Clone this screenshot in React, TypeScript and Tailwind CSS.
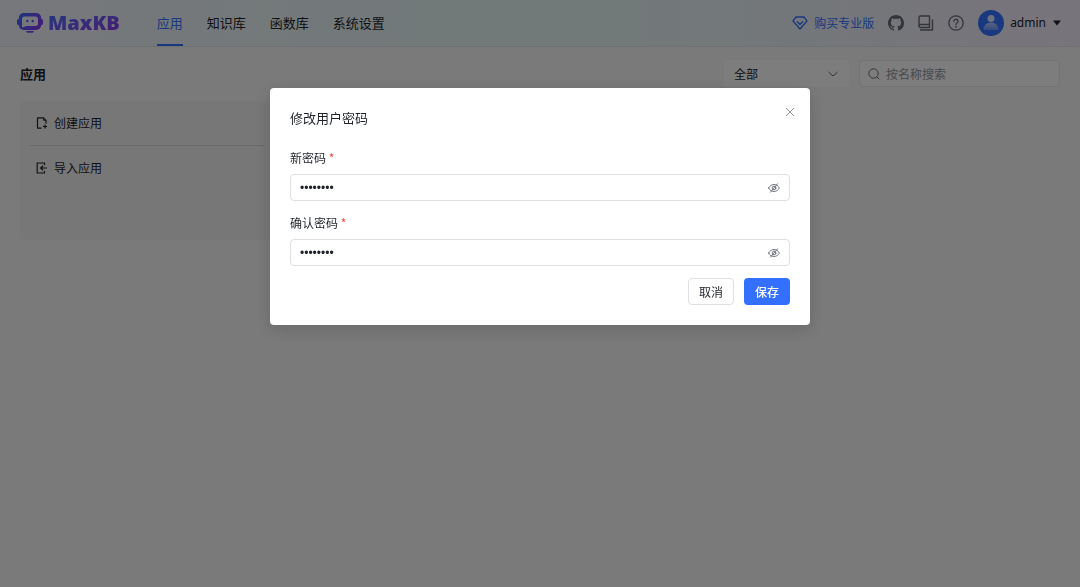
import { useState } from "react";
import type { ReactNode } from "react";

const navItems = ["应用", "知识库", "函数库", "系统设置"];

function LogoIcon() {
  return (
    <svg width="26" height="22" viewBox="0 0 26 22" fill="none">
      <defs>
        <linearGradient id="logo" x1="0" y1="0" x2="26" y2="22" gradientUnits="userSpaceOnUse">
          <stop stopColor="#3370ff" />
          <stop offset="1" stopColor="#9a2de8" />
        </linearGradient>
      </defs>
      <rect x="0" y="7" width="26" height="6" rx="1.5" fill="url(#logo)" />
      <rect x="1.8" y="1" width="22.4" height="17" rx="5" fill="url(#logo)" />
      <path d="M7.5 4.500h11A2.500 2.500 0 0 1 21 7v4.500a2.500 2.500 0 0 1-2.500 2.500H9.500L5 15.500V7a2.500 2.500 0 0 1 2.500-2.500z" fill="#eceff8" />
      <circle cx="10.300" cy="9" r="1.200" fill="url(#logo)" />
      <circle cx="15.700" cy="9" r="1.200" fill="url(#logo)" />
      <path d="M9 19h8l-1 1.800h-6z" fill="url(#logo)" />
    </svg>
  );
}

function DiamondIcon() {
  return (
    <svg width="16" height="16" viewBox="0 0 16 16" fill="none" stroke="#3370ff" strokeWidth="1.300" strokeLinejoin="round" strokeLinecap="round">
      <path d="M4 2h8l3 4-7 8-7-8z" />
      <path d="M5.300 6.700L8 9.500l2.700-2.800" />
    </svg>
  );
}

function GithubIcon() {
  return (
    <svg width="16" height="16" viewBox="0 0 16 16" fill="currentColor">
      <path d="M8 0C3.580 0 0 3.580 0 8c0 3.540 2.290 6.530 5.470 7.590.4.070.55-.17.55-.38 0-.19-.01-.82-.01-1.490-2.010.37-2.530-.49-2.690-.94-.09-.23-.48-.94-.82-1.130-.28-.15-.68-.52-.01-.53.63-.01 1.080.58 1.230.82.72 1.210 1.870.87 2.330.66.07-.52.28-.87.51-1.070-1.780-.2-3.640-.89-3.640-3.950 0-.87.31-1.590.82-2.150-.08-.2-.36-1.020.08-2.120 0 0 .67-.21 2.200.82.64-.18 1.320-.27 2-.27s1.360.09 2 .27c1.530-1.040 2.200-.82 2.200-.82.44 1.100.16 1.920.08 2.120.51.56.82 1.270.82 2.150 0 3.070-1.870 3.750-3.650 3.950.29.25.54.73.54 1.480 0 1.070-.01 1.930-.01 2.200 0 .21.15.46.55.38A8.010 8.010 0 0 0 16 8c0-4.420-3.580-8-8-8z" />
    </svg>
  );
}

function BookIcon() {
  return (
    <svg width="16" height="16" viewBox="0 0 16 16" fill="none" stroke="currentColor" strokeWidth="1.400" strokeLinejoin="round">
      <path d="M2.500 1h9v11.500h-9A1.500 1.500 0 0 1 1 11V2.500A1.500 1.500 0 0 1 2.500 1z" />
      <path d="M1 11a1.500 1.500 0 0 1 1.500-1.500h9" />
      <path d="M14.500 4.500V15H2" />
    </svg>
  );
}

function HelpIcon() {
  return (
    <svg width="16" height="16" viewBox="0 0 16 16" fill="none" stroke="currentColor" strokeWidth="1.300" strokeLinecap="round">
      <circle cx="8" cy="8" r="7.200" />
      <path d="M6 6.300a2 2 0 1 1 3 1.700c-.7.400-1 .8-1 1.500" />
      <circle cx="8" cy="11.700" r=".3" />
    </svg>
  );
}

function Avatar() {
  return (
    <svg width="26" height="26" viewBox="0 0 26 26">
      <defs>
        <linearGradient id="body" x1="0" y1="12" x2="0" y2="21" gradientUnits="userSpaceOnUse">
          <stop stopColor="#b8ceff" />
          <stop offset="1" stopColor="#5c8dff" />
        </linearGradient>
      </defs>
      <circle cx="13" cy="13" r="13" fill="#3370ff" />
      <path d="M5.500 20c0-4.500 3-7.500 7.500-7.500s7.500 3 7.500 7.500z" fill="url(#body)" />
      <circle cx="13" cy="8.500" r="3.500" fill="#d6e2ff" />
    </svg>
  );
}

function CreateIcon() {
  return (
    <svg width="12" height="12" viewBox="0 0 12 12" fill="none" stroke="currentColor" strokeWidth="1.200" strokeLinejoin="round">
      <path d="M5.500 11.200H1.500V.8h6L10 3.300v3.200" />
      <path d="M7.500 .8v2.500H10" strokeWidth=".8" />
      <path d="M9 7.500v4M7 9.500h4" />
    </svg>
  );
}

function ImportIcon() {
  return (
    <svg width="12" height="12" viewBox="0 0 12 12" fill="none" stroke="currentColor" strokeWidth="1.200">
      <path d="M8.500 3V1H1.200v10h7.300V9" />
      <path d="M11 6H5M7 3.700L4.600 6 7 8.300" />
    </svg>
  );
}

function HiddenEyeIcon() {
  return (
    <svg width="12" height="12" viewBox="0 0 12 12" fill="none" stroke="currentColor" strokeWidth=".9" strokeLinecap="round">
      <path d="M.6 6C1.800 3.700 3.700 2.500 6 2.500S10.200 3.700 11.400 6C10.200 8.300 8.300 9.500 6 9.500S1.800 8.300.6 6z" />
      <circle cx="6" cy="6" r="1.900" />
      <path d="M9.500 1.800L2.500 10.200" />
    </svg>
  );
}

function CardAction({ icon, label }: { icon: ReactNode; label: string }) {
  return (
    <button type="button" className="flex h-11 w-full items-center gap-[5px] px-1.5 text-left text-[#1f2329]">
      <span className="flex w-3.5 justify-center">{icon}</span>
      {label}
    </button>
  );
}

function PasswordField({ id, label }: { id: string; label: string }) {
  const [value, setValue] = useState("password");
  const [visible, setVisible] = useState(false);

  return (
    <div className="mb-3">
      <label htmlFor={id} className="mb-1.5 block leading-5 text-[#1f2329]">
        {label} <span className="text-[#f54a45]">*</span>
      </label>
      <div className="flex h-[27px] items-center rounded border border-[#dee0e3] bg-white px-[9px]">
        <input
          id={id}
          type={visible ? "text" : "password"}
          value={value}
          onChange={(e) => setValue(e.target.value)}
          className="min-w-0 flex-1 font-['Liberation_Sans',sans-serif] text-[#1f2329] outline-none"
        />
        <button type="button" aria-label="显示密码" onClick={() => setVisible(!visible)} className="text-[#646a73]">
          <HiddenEyeIcon />
        </button>
      </div>
    </div>
  );
}

function Header() {
  return (
    <header className="flex h-[47px] items-center justify-between border-b border-[#dee0e3] bg-linear-to-r from-[#eef0f8] via-[#e2f4f2] to-[#f0e9f7] pr-[18px] pl-[17px]">
      <div className="flex h-full items-center">
        <a href="#" className="flex items-center gap-[5px]">
          <LogoIcon />
          <span className="bg-linear-to-br from-[#3370ff] to-[#8f2de8] bg-clip-text font-['Noto_Sans','Open_Sans',sans-serif] text-xl leading-7 font-black text-transparent">
            MaxKB
          </span>
        </a>
        <nav className="ml-[37px] flex h-full gap-6 text-[13px]">
          {navItems.map((item, index) => (
            <a
              key={item}
              href="#"
              className={
                index === 0
                  ? "flex items-center border-b-2 border-[#3370ff] pt-0.5 text-[#3370ff]"
                  : "flex items-center border-b-2 border-transparent pt-0.5 text-[#1f2329]"
              }
            >
              {item}
            </a>
          ))}
        </nav>
      </div>
      <div className="flex items-center gap-3.5 text-[#646a73]">
        <a href="#" className="flex items-center gap-1.5 text-[#3370ff]">
          <DiamondIcon />
          购买专业版
        </a>
        <a href="#" aria-label="GitHub"><GithubIcon /></a>
        <a href="#" aria-label="用户手册"><BookIcon /></a>
        <a href="#" aria-label="帮助"><HelpIcon /></a>
        <button type="button" className="flex items-center gap-1.5 text-[#1f2329]">
          <Avatar />
          <span className="font-['Noto_Sans',sans-serif]">admin</span>
          <svg width="10" height="6" viewBox="0 0 10 6" fill="currentColor">
            <path d="M1 .5h8L5 5.500z" />
          </svg>
        </button>
      </div>
    </header>
  );
}

function PasswordDialog() {
  return (
    <div className="fixed inset-0 flex items-start justify-center bg-black/50 pt-[15vh]">
      <div role="dialog" aria-labelledby="dialog-title" className="w-1/2 rounded bg-white p-5 shadow-[0_4px_16px_rgba(31,35,41,0.2)]">
        <div className="mb-5 flex items-start justify-between">
          <h2 id="dialog-title" className="text-[13px] leading-5 text-[#1f2329]">修改用户密码</h2>
          <button type="button" aria-label="关闭" className="-mt-1 -mr-[5px] text-[#8f959e]">
            <svg width="10" height="16" viewBox="0 0 10 16" fill="none" stroke="currentColor">
              <path d="M1 4l8 8M9 4l-8 8" />
            </svg>
          </button>
        </div>
        <form onSubmit={(e) => e.preventDefault()}>
          <PasswordField id="new-password" label="新密码" />
          <PasswordField id="confirm-password" label="确认密码" />
          <div className="flex justify-end gap-2.5">
            <button type="button" className="h-[27px] rounded border border-[#dee0e3] px-2.5 text-[#1f2329]">取消</button>
            <button type="submit" className="h-[27px] rounded bg-[#3370ff] px-[11px] font-medium text-white">保存</button>
          </div>
        </form>
      </div>
    </div>
  );
}

function App() {
  return (
    <div className="min-h-screen bg-[#f5f5f5] font-['Noto_Sans_CJK_SC',sans-serif] text-xs">
      <Header />
      <main className="px-5 pt-[13px]">
        <div className="flex items-center justify-between">
          <h1 className="text-[13px] font-bold text-[#1f2329]">应用</h1>
          <div className="flex gap-2.5">
            <div className="relative">
              <select aria-label="筛选" className="h-[27px] w-[125px] appearance-none rounded bg-[#fafafa] px-2.5 text-[#1f2329]">
                <option>全部</option>
              </select>
              <svg className="pointer-events-none absolute top-2 right-2.5 text-[#646a73]" width="12" height="12" viewBox="0 0 12 12" fill="none" stroke="currentColor">
                <path d="M1.500 4L6 8l4.500-4" />
              </svg>
            </div>
            <div className="flex h-[27px] w-[201px] items-center gap-1.5 rounded border border-[#e4e6e9] bg-[#fafafa] px-2 text-[#646a73]">
              <svg width="12" height="12" viewBox="0 0 12 12" fill="none" stroke="currentColor">
                <circle cx="5.500" cy="5.500" r="4.700" />
                <path d="M9 9l2.200 2.200" />
              </svg>
              <input aria-label="按名称搜索" placeholder="按名称搜索" className="min-w-0 flex-1 outline-none placeholder:text-[#8f959e]" />
            </div>
          </div>
        </div>
        <div className="mt-3.5 grid grid-cols-4 gap-2.5">
          <div className="h-[139px] rounded bg-[#efefef] px-[9px]">
            <CardAction icon={<CreateIcon />} label="创建应用" />
            <hr className="border-[#d5d6d8]" />
            <CardAction icon={<ImportIcon />} label="导入应用" />
          </div>
        </div>
      </main>
      <PasswordDialog />
    </div>
  );
}

export default App;
